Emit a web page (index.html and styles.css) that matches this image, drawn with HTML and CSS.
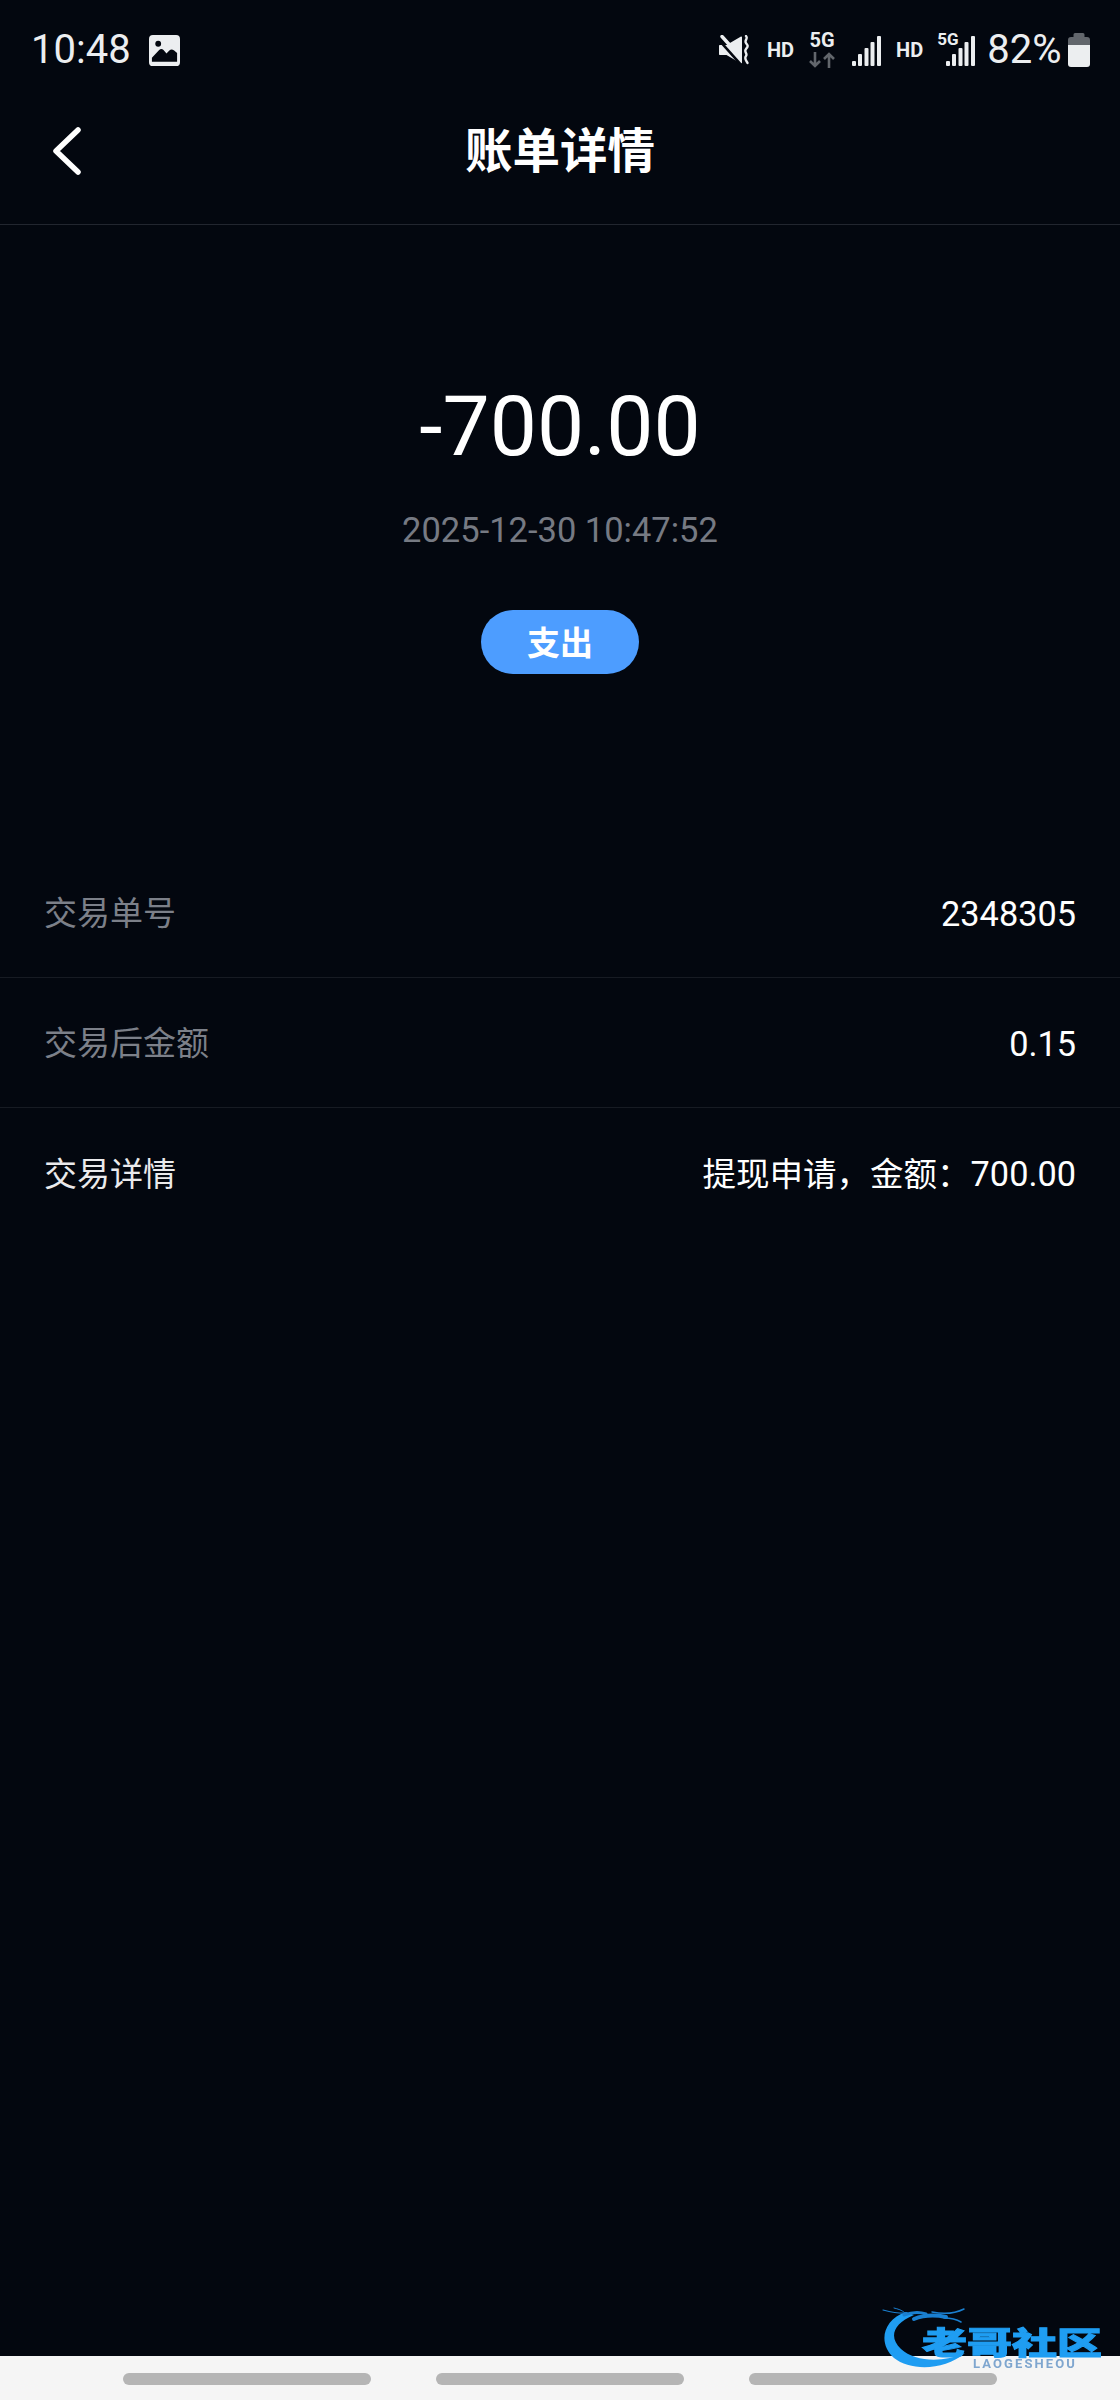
FILE: index.html
```html
<!DOCTYPE html>
<html lang="zh-CN">
<head>
<meta charset="utf-8">
<title>账单详情</title>
<link rel="stylesheet" href="styles.css">
</head>
<body>
<div class="screen">
  <div class="status">
    <div class="status-left">
      <span class="clock">10:48</span>
      <svg class="pic" viewBox="0 0 32 32"><path fill="#eceef0" fill-rule="evenodd" d="M4 0h24a4 4 0 0 1 4 4v24a4 4 0 0 1-4 4H4a4 4 0 0 1-4-4V4a4 4 0 0 1 4-4zM3 27.500h26v-9l-3-2.500c-2-1.500-3.500-1.500-5 0l-3 3-3-3.500c-1.500-1.500-3-1.500-4.500 0L3 23.500z"/><circle cx="9.500" cy="9" r="3" fill="#03070f"/></svg>
    </div>
    <div class="status-right">
      <svg class="mute" viewBox="0 0 30 30">
        <path fill="#eceef0" d="M1 10h6.500L22 1.500c.6-.3 1 .1 1 .7v25.600c0 .6-.4 1-1 .7L7.500 20H1c-.6 0-1-.4-1-1v-8c0-.6.4-1 1-1z"/>
        <path fill="none" stroke="#03070f" stroke-width="2.600" d="M0 5l24 27"/>
        <path fill="none" stroke="#eceef0" stroke-width="3.400" stroke-linecap="round" d="M3 1.500l9 10"/>
        <path fill="none" stroke="#eceef0" stroke-width="2.400" stroke-linecap="round" d="M27 1c2.500 2.500-2 4.500 0 7s2.500 3 0 6 2 4.500 0 7 0 4 1.500 7"/>
      </svg>
      <span class="net net-hd">HD</span>
      <div class="net-stack">
        <span class="net">5G</span>
        <svg class="arrows" viewBox="0 0 26 16"><path fill="none" stroke="#62666c" stroke-width="2.600" d="M6 0v14M1 9l5 5 5-5M20 16V2M15 7l5-5 5 5"/></svg>
      </div>
      <svg class="signal sig-first" viewBox="0 0 29 30"><rect x="0" y="25" width="4" height="5" rx="1" fill="#eceef0"/><rect x="6" y="18" width="4" height="12" rx="1" fill="#eceef0"/><rect x="12.500" y="12" width="4" height="18" rx="1" fill="#eceef0"/><rect x="18.500" y="6" width="4" height="24" rx="1" fill="#eceef0"/><rect x="25" y="0" width="4" height="30" rx="1" fill="#eceef0"/></svg>
      <span class="net net-hd2">HD</span>
      <div class="sig-wrap">
        <span class="net net-small">5G</span>
        <svg class="signal" viewBox="0 0 29 30"><rect x="0" y="25" width="4" height="5" rx="1" fill="#eceef0"/><rect x="6" y="18" width="4" height="12" rx="1" fill="#eceef0"/><rect x="12.500" y="12" width="4" height="18" rx="1" fill="#eceef0"/><rect x="18.500" y="6" width="4" height="24" rx="1" fill="#eceef0"/><rect x="25" y="0" width="4" height="30" rx="1" fill="#eceef0"/></svg>
      </div>
      <span class="pct">82%</span>
      <svg class="battery" viewBox="0 0 22 34"><path fill="#62666c" d="M7 0h8a1.500 1.500 0 0 1 1.500 1.500V4H19a3 3 0 0 1 3 3v5H0V7a3 3 0 0 1 3-3h2.500V1.500A1.500 1.500 0 0 1 7 0z"/><path fill="#eceef0" d="M0 12h22v19a3 3 0 0 1-3 3H3a3 3 0 0 1-3-3z"/></svg>
    </div>
  </div>

  <header class="nav">
    <svg class="back" viewBox="0 0 30 48"><path fill="none" stroke="#fff" stroke-width="5.500" stroke-linecap="round" stroke-linejoin="round" d="M26 3L4 24l22 21"/></svg>
    <h1 class="title">账单详情</h1>
  </header>

  <section class="summary">
    <div class="amount">-700.00</div>
    <div class="date">2025-12-30 10:47:52</div>
    <div class="tag">支出</div>
  </section>

  <section class="rows">
    <div class="row"><span class="label muted">交易单号</span><span class="value">2348305</span></div>
    <div class="row"><span class="label muted">交易后金额</span><span class="value">0.15</span></div>
    <div class="row row-last"><span class="label">交易详情</span><span class="value"><span class="value-cjk">提现申请，金额：</span>700.00</span></div>
  </section>

  <div class="home-bar">
    <span class="pill"></span>
    <span class="pill"></span>
    <span class="pill"></span>
  </div>

  <div class="watermark">
    <svg class="dragon" viewBox="0 0 110 80">
      <path fill="#1f9df2" d="M36 12C12 20 8 44 24 58c16 13 50 13 71-5-22 10-50 9-64-4C19 38 22 24 44 15z"/>
      <g fill="none" stroke="#1a7fd0" stroke-linecap="round">
        <path stroke-width="1.200" d="M13 10c8 2 16 4 24 3"/>
        <path stroke-width="3" d="M34 15c8-3 14-4 22-1"/>
        <path stroke-width="4" d="M44 19c10-4 22-4 32-2"/>
        <path stroke-width="1.500" d="M62 12c10 2 22 2 32-3"/>
        <path stroke-width="1.500" d="M74 18c6 0 12 1 17 4"/>
        <path stroke-width="1" d="M24 8c4 1 8 2 11 5"/>
      </g>
    </svg>
    <span class="wm-title">老哥社区</span>
    <span class="wm-sub">LAOGESHEOU</span>
  </div>
</div>
</body>
</html>
```

FILE: styles.css
```css
* { box-sizing: border-box; }
html, body { margin: 0; padding: 0; background: #03070f; }
body {
  font-family: Roboto, "Noto Sans CJK SC", sans-serif;
  color: #fff;
}
.screen {
  position: relative;
  width: 1120px;
  height: 2400px;
  display: flex;
  flex-direction: column;
  overflow: hidden;
  background: #03070f;
}

/* status bar */
.status {
  height: 76px;
  padding: 24px 30px 0 31px;
  display: flex;
  justify-content: space-between;
  align-items: center;
  color: #eceef0;
}
.status-left { display: flex; align-items: center; }
.clock { font-size: 40px; line-height: 52px; }
.pic { width: 31px; height: 31px; margin-left: 18px; }
.status-right { display: flex; align-items: center; }
.mute { width: 30px; height: 30px; }
.net { font-size: 20px; line-height: 16px; font-weight: 700; color: #eceef0; }
.net-hd { margin-left: 17.500px; }
.net-stack {
  margin-left: 15px;
  width: 26px;
  display: flex;
  flex-direction: column;
  align-items: center;
  gap: 4px;
}
.arrows { width: 26px; height: 16px; display: block; }
.signal { width: 29px; height: 30px; display: block; }
.sig-first { margin-left: 17px; margin-top: 2px; }
.net-hd2 { margin-left: 15px; }
.sig-wrap { position: relative; margin-left: 23px; margin-top: 2px; }
.net-small {
  position: absolute;
  left: -9px;
  top: -4px;
  font-size: 17px;
  line-height: 14px;
}
.pct { font-size: 40px; line-height: 52px; margin-left: 12px; }
.battery { width: 22px; height: 34px; margin-left: 6.500px; }

/* nav */
.nav {
  position: relative;
  height: 149px;
  padding-bottom: 4px;
  border-bottom: 1px solid #22262f;
  display: flex;
  align-items: center;
  justify-content: center;
}
.back {
  position: absolute;
  left: 52px;
  top: 51px;
  width: 30px;
  height: 48px;
}
.title {
  margin: 0;
  font-size: 47.500px;
  line-height: 60px;
  font-weight: 700;
  font-family: "Noto Sans CJK SC", sans-serif;
}

/* summary */
.summary {
  height: 623px;
  padding-top: 152px;
  display: flex;
  flex-direction: column;
  align-items: center;
}
.amount { font-size: 84px; line-height: 100px; color: #fff; }
.date { margin-top: 28px; font-size: 34.500px; line-height: 50px; color: #767a83; }
.tag {
  margin-top: 55px;
  width: 158px;
  height: 64px;
  padding-bottom: 2px;
  border-radius: 32px;
  background: #4d9dff;
  display: flex;
  align-items: center;
  justify-content: center;
  font-size: 33px;
  font-weight: 700;
  color: #fff;
}

/* rows */
.row {
  height: 130px;
  padding: 2px 44px 0;
  display: flex;
  justify-content: space-between;
  align-items: center;
  border-bottom: 1px solid #171b23;
}
.row-last { border-bottom: 0; }
.label { padding-top: 1px; font-size: 33px; line-height: 44px; color: #eaeaec; }
.label.muted { color: #7c8089; }
.value { font-size: 34.300px; line-height: 44px; color: #fff; }
.value-cjk { font-size: 33.500px; }

/* gesture bar */
.home-bar {
  margin-top: auto;
  height: 44px;
  padding: 17px 0 0 123px;
  background: #f5f5f5;
  display: flex;
  align-items: flex-start;
  gap: 65px;
}
.pill {
  width: 248px;
  height: 12px;
  border-radius: 6px;
  background: #b5b5b5;
}

/* watermark */
.watermark {
  position: absolute;
  left: 870px;
  top: 2300px;
  width: 250px;
  height: 80px;
  filter: blur(0.6px);
}
.dragon { position: absolute; left: 0; top: 0; width: 110px; height: 80px; }
.wm-title {
  position: absolute;
  left: 52px;
  top: 25px;
  font-family: "Noto Sans CJK SC", sans-serif;
  font-size: 45px;
  line-height: 45px;
  font-weight: 900;
  white-space: nowrap;
  color: #1f9df2;
  -webkit-text-stroke: 1.500px #1f9df2;
  transform: scaleY(0.68);
  transform-origin: left top;
}
.wm-sub {
  position: absolute;
  left: 103px;
  top: 57px;
  font-family: Roboto, sans-serif;
  font-size: 13px;
  line-height: 14px;
  font-weight: 700;
  letter-spacing: 2.100px;
  color: #7fa6cf;
  white-space: nowrap;
}
```
